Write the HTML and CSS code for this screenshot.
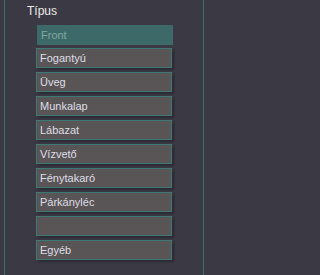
FILE: index.html
```html
<!DOCTYPE html>
<html>
<head>
<meta charset="utf-8">
<link rel="stylesheet" href="styles.css">
</head>
<body>
<div class="panel">
  <div class="title">Típus</div>
  <div class="list">
    <div class="btn active">Front</div>
    <div class="btn">Fogantyú</div>
    <div class="btn">Üveg</div>
    <div class="btn">Munkalap</div>
    <div class="btn">Lábazat</div>
    <div class="btn">Vízvető</div>
    <div class="btn">Fénytakaró</div>
    <div class="btn">Párkányléc</div>
    <div class="btn"></div>
    <div class="btn">Egyéb</div>
  </div>
</div>
</body>
</html>
```
FILE: styles.css
```css
html, body {
  margin: 0;
  padding: 0;
  background: #3b3a44;
  width: 208px;
  height: 275px;
  overflow: hidden;
}
.panel {
  margin-left: 4px;
  width: 198px;
  height: 275px;
  border-left: 1px solid #3c6f6b;
  border-right: 1px solid #3c6f6b;
  font-family: "Liberation Sans", Arial, sans-serif;
}
.title {
  padding-left: 22px;
  padding-top: 4px;
  height: 20px;
  font-size: 12px;
  line-height: 14px;
  color: #ecebe8;
}
.list {
  display: flex;
  flex-direction: column;
  gap: 4px;
  padding-left: 31px;
}
.btn {
  box-sizing: border-box;
  width: 136px;
  height: 20px;
  background: #595556;
  border: 1px solid #3a7a73;
  box-shadow: 2px 2px 2px rgba(0, 0, 0, 0.28);
  color: #dedde6;
  font-size: 11px;
  line-height: 18px;
  padding-left: 3px;
}
.btn.active {
  background: #3d6a68;
  border-color: #3d6a68;
  color: #80a7a4;
  box-shadow: none;
  margin-left: 1px;
  margin-top: 1px;
  margin-bottom: -1px;
}
```
